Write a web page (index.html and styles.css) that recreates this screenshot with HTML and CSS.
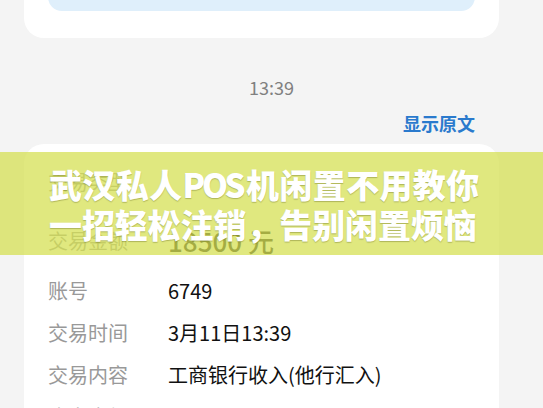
FILE: index.html
```html
<!DOCTYPE html>
<html>
<head>
<meta charset="UTF-8">
<title>短信详情</title>
<link rel="stylesheet" href="styles.css">
</head>
<body>
	<div class="page">
		<div class="card card-top">
			<div class="btn-light">查看详情</div>
		</div>

		<div class="time">13:39</div>
		<div class="origin"><a href="#">显示原文</a></div>

		<div class="card card-info">
			<div class="row"><span class="label">交易类型</span><span class="value"></span></div>
			<div class="row row-amount"><span class="label">交易金额</span><span class="value amount">18500 元</span></div>
			<div class="row row-first"><span class="label">账号</span><span class="value">6749</span></div>
			<div class="row"><span class="label">交易时间</span><span class="value">3月11日13:39</span></div>
			<div class="row"><span class="label">交易内容</span><span class="value">工商银行收入(他行汇入)</span></div>
			<div class="row"><span class="label">账户余额</span><span class="value">34718.88元</span></div>
		</div>

		<div class="banner">
			<div class="banner-line line-one">武汉私人POS机闲置不用教你</div>
			<div class="banner-line line-two">一招轻松注销，告别闲置烦恼</div>
		</div>
	</div>
</body>
</html>
```

FILE: styles.css
```css
body {
	margin: 0;
	background: #f4f4f4;
	font-family: "Noto Sans CJK SC", "Noto Sans", sans-serif;
	width: 543px;
	height: 408px;
	overflow: hidden;
}

.page {
	position: relative;
	display: flow-root;
}

.card {
	background: #fff;
	border-radius: 20px;
	margin: 0 44px 0 24px;
}

.card-top {
	margin-top: -60px;
	padding: 24px 24px 27px;
}

.btn-light {
	height: 47px;
	line-height: 47px;
	background: #dfeffb;
	border-radius: 14px;
	color: #3d8fd8;
	font-size: 17px;
	text-align: center;
}

.time {
	margin-top: 37px;
	line-height: 24px;
	text-align: center;
	color: #808080;
	font-size: 18px;
}

.origin {
	margin-top: 12px;
	line-height: 24px;
	text-align: right;
	padding-right: 68px;
}

.origin a {
	color: #2a7acd;
	font-size: 18px;
	font-weight: 700;
	text-decoration: none;
}

.card-info {
	margin-top: 8px;
	padding: 17px 24px 40px;
}

.row {
	display: flex;
	line-height: 42px;
	font-size: 20px;
}

.row-amount {
	margin-top: 17px;
}

.row-first {
	margin-top: 8px;
}

.label {
	width: 120px;
	color: #999;
}

.value {
	color: #111;
}

.amount {
	font-size: 26px;
	font-weight: 500;
}

.banner {
	position: absolute;
	top: 152px;
	left: 0;
	width: 543px;
	height: 103px;
	box-sizing: border-box;
	padding: 12px 0 0 49px;
	background: rgba(214, 224, 84, 0.75);
}

.banner-line {
	width: 427px;
	color: #fff;
	font-size: 33px;
	font-weight: 900;
	line-height: 40px;
	text-align: justify;
	text-align-last: justify;
	white-space: nowrap;
	text-shadow: 0 1px 1px rgba(80, 90, 20, 0.35);
}

.line-one {
	letter-spacing: -3.2px;
}

.line-two {
	letter-spacing: -0.8px;
}
```
